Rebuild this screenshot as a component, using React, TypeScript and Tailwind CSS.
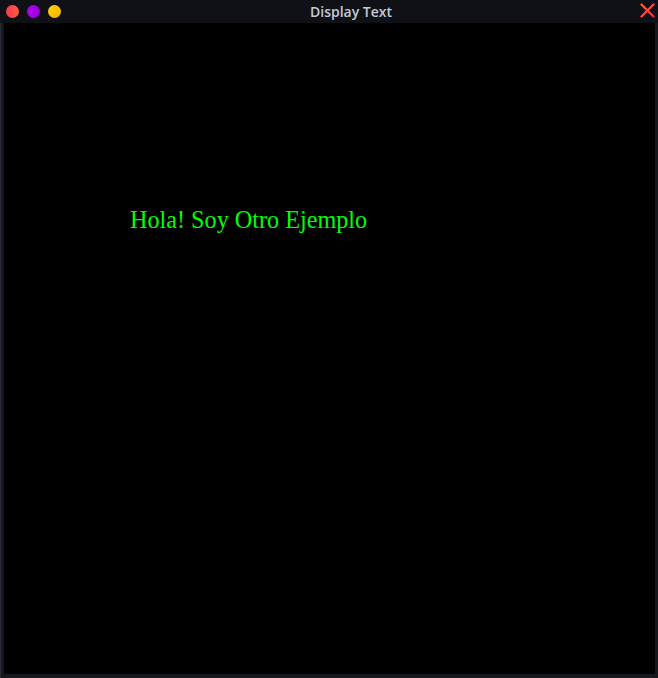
export default function App() {
  return (
    <div className="flex h-[678px] w-[658px] flex-col bg-[#101117]">
      {/* title bar */}
      <div className="relative flex h-[23px] shrink-0 items-center">
        <div className="ml-[6px] flex gap-[8px]">
          <span className="h-[13px] w-[13px] rounded-full bg-gradient-to-r from-[#ff3650] to-[#ff5a3c]" />
          <span className="h-[13px] w-[13px] rounded-full bg-gradient-to-r from-[#b000f0] to-[#9a00d8]" />
          <span className="h-[13px] w-[13px] rounded-full bg-gradient-to-br from-[#ffd400] to-[#ffae00]" />
        </div>
        <div className="absolute left-[310px] top-[1px] font-['Open_Sans',sans-serif] text-[14px] font-semibold text-[#c4cad6]">
          Display Text
        </div>
        <svg className="absolute right-[3px] top-[3px]" width="15" height="15" viewBox="0 0 15 15">
          <defs>
            <linearGradient id="xg" x1="0" y1="0" x2="1" y2="1">
              <stop offset="0" stopColor="#ff6a2a" />
              <stop offset="1" stopColor="#ff2a5a" />
            </linearGradient>
          </defs>
          <path d="M1.5 1.5 L13.5 13.5 M13.5 1.5 L1.5 13.5" stroke="url(#xg)" strokeWidth="2.2" strokeLinecap="round" />
        </svg>
      </div>
      {/* window body */}
      <div className="flex flex-1 border-l border-[#2a2d35] bg-[#16181d] pb-[4px] pl-[3px] pr-[3px]">
        <div className="flex-1 bg-black pl-[126px] pt-[183px]">
          <p className="font-['Liberation_Serif',serif] text-[24.2px] leading-[28px] text-[#00ff00]">
            Hola! Soy Otro Ejemplo
          </p>
        </div>
      </div>
    </div>
  );
}
